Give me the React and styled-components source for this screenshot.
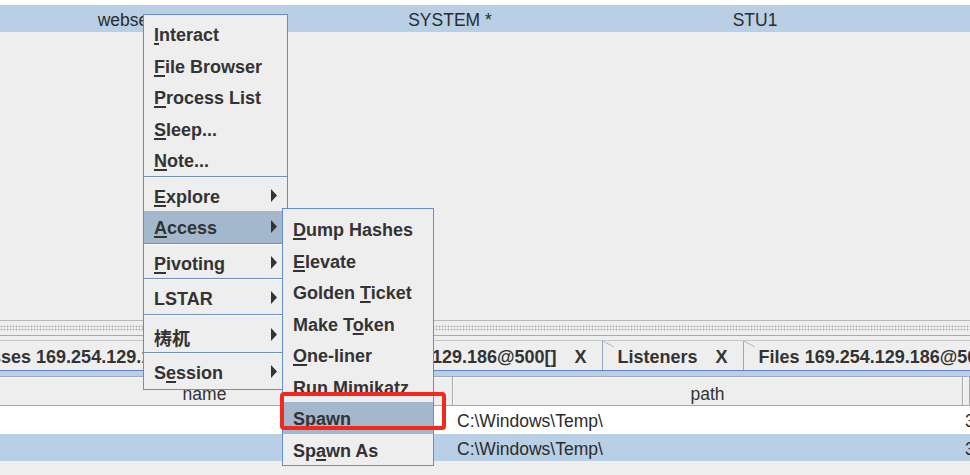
import React from 'react';
import styled, { createGlobalStyle } from 'styled-components';

const GlobalStyle = createGlobalStyle`
	html, body {
		margin: 0;
		padding: 0;
		background: #eeeeee;
	}
	body {
		font-family: "Liberation Sans", Arial, sans-serif;
		color: #333333;
		overflow: hidden;
	}
`;

const Page = styled.div`
	position: relative;
	width: 970px;
	height: 475px;
	overflow: hidden;
	background: #eeeeee;
`;

const TopPane = styled.div`
	height: 320px;
`;

const BlankStrip = styled.div`
	height: 5px;
	background: #ffffff;
`;

const BeaconRow = styled.div`
	display: grid;
	grid-template-columns: 276px 348px 262px 1fr;
	align-items: center;
	height: 27px;
	background: ${(p) => (p.$selected ? '#b8cfe5' : '#ffffff')};
	font-size: 17.5px;
	color: #2b2b2b;
`;

const Cell = styled.div`
	text-align: ${(p) => p.$align || 'center'};
	padding-left: ${(p) => p.$pad || 0}px;
	padding-top: 4px;
	white-space: nowrap;
	overflow: hidden;
`;

const Divider = styled.div`
	display: flex;
	align-items: center;
	height: 16px;
	box-sizing: border-box;
	border-top: 1px solid #b9b9b9;
	border-bottom: 1px solid #9aabc8;
`;

const Grip = styled.div`
	flex: 1;
	height: 6px;
	background-image: radial-gradient(circle, #a9a9a9 0.8px, transparent 1.1px);
	background-size: 3px 3px;
`;

const BottomPane = styled.div`
	padding-top: 4px;
`;

const TabStrip = styled.div`
	display: flex;
	height: 30px;
	box-sizing: border-box;
	margin-left: -75px;
	border-top: 1px solid #c6c6c6;
`;

const Tab = styled.div`
	position: relative;
	flex: none;
	display: flex;
	align-items: center;
	gap: 18px;
	padding: 4px 15px 0;
	border-left: 1px solid #98a9c6;
	font-size: 18px;
	font-weight: bold;
	color: #333333;
	white-space: nowrap;

	&::before {
		content: '';
		position: absolute;
		left: 0;
		top: 0;
		width: 11px;
		height: 6px;
		background: linear-gradient(
			to top right,
			transparent calc(50% - 0.7px),
			#98a9c6 50%,
			transparent calc(50% + 0.7px)
		);
	}
`;

const TabEdge = styled.div`
	height: 7px;
	box-sizing: border-box;
	border-top: 1px solid #6382bf;
	border-bottom: 1px solid #9aabc8;
	background: #b8cfe5;
`;

const FileTable = styled.div`
	margin-left: -43px;
`;

const FileRow = styled.div`
	display: grid;
	grid-template-columns: 496px 510px 1fr;
	align-items: center;
	height: ${(p) => (p.$header ? 29 : 27.5)}px;
	background: ${(p) => (p.$header ? '#eeeeee' : p.$selected ? '#b8cfe5' : '#ffffff')};
	font-size: 17.5px;
	color: #2b2b2b;
`;

const HeadCell = styled.div`
	height: 100%;
	box-sizing: border-box;
	display: flex;
	align-items: center;
	justify-content: center;
	padding-top: 6px;
	border-right: 1px solid #a9a9a9;
	border-bottom: 1px solid #a9a9a9;
	box-shadow: inset 1px 1px 0 #fafafa;
	color: #333333;
`;

const Popup = styled.div`
	position: absolute;
	left: ${(p) => p.$x}px;
	top: ${(p) => p.$y}px;
	width: ${(p) => p.$w}px;
	box-sizing: border-box;
	padding: ${(p) => p.$pad};
	background: #eeeeee;
	border: 1px solid #6a8bd0;
	z-index: ${(p) => p.$z};
`;

const Item = styled.div`
	display: flex;
	align-items: center;
	justify-content: space-between;
	height: ${(p) => (p.$tall ? 34.5 : 31.5)}px;
	padding: 0 10px;
	background: ${(p) => (p.$active ? '#a3b8cc' : 'transparent')};
	font-size: 18px;
	font-weight: bold;
	color: #333333;
	white-space: nowrap;
`;

const Label = styled.span`
	padding-top: 4px;
`;

const Cjk = styled.span`
	font-family: "Noto Sans CJK SC", "Liberation Sans", sans-serif;
	font-weight: bold;
	font-size: 18px;
`;

const Mn = styled.span`
	text-decoration: underline;
	text-decoration-thickness: 1.5px;
	text-underline-offset: 2px;
`;

const Separator = styled.div`
	height: 4px;
	background: linear-gradient(to bottom, transparent 0 0.5px, #6f8fcc 0.5px 1.5px, #fbfbfb 1.5px 2.5px, transparent 2.5px);
`;

const Annotation = styled.div`
	position: absolute;
	left: 280px;
	top: 392px;
	width: 166px;
	height: 38px;
	box-sizing: border-box;
	border: 4px solid #f4281d;
	border-radius: 4px;
	z-index: 5;
`;

function Arrow() {
	return (
		<svg width="6" height="13" viewBox="0 0 6 13">
			<polygon points="0,0 6,6.5 0,13" fill="#333333" />
		</svg>
	);
}

function MenuEntry({ children, sub, active, tall }) {
	return (
		<Item $active={active} $tall={tall}>
			<Label>{children}</Label>
			{sub && <Arrow />}
		</Item>
	);
}

export default function App() {
	return (
		<>
			<GlobalStyle />
			<Page>
				<TopPane>
					<BlankStrip />
					<BeaconRow $selected>
						<Cell>webserver</Cell>
						<Cell>SYSTEM *</Cell>
						<Cell>STU1</Cell>
						<Cell />
					</BeaconRow>
				</TopPane>

				<Divider>
					<Grip />
				</Divider>

				<BottomPane>
					<TabStrip>
						<Tab>
							<span>Processes 169.254.129.186@500[]</span>
							<span>X</span>
						</Tab>
						<Tab>
							<span>Beacon 169.254.129.186@500[]</span>
							<span>X</span>
						</Tab>
						<Tab>
							<span>Listeners</span>
							<span>X</span>
						</Tab>
						<Tab>
							<span>Files 169.254.129.186@500[]</span>
							<span>X</span>
						</Tab>
					</TabStrip>
					<TabEdge />
					<FileTable>
						<FileRow $header>
							<HeadCell>name</HeadCell>
							<HeadCell>path</HeadCell>
							<HeadCell />
						</FileRow>
						<FileRow>
							<Cell />
							<Cell $align="left" $pad={4}>{'C:\\Windows\\Temp\\'}</Cell>
							<Cell $align="left" $pad={2}>3</Cell>
						</FileRow>
						<FileRow $selected>
							<Cell />
							<Cell $align="left" $pad={4}>{'C:\\Windows\\Temp\\'}</Cell>
							<Cell $align="left" $pad={2}>3</Cell>
						</FileRow>
					</FileTable>
				</BottomPane>

				<Popup $x={143} $y={14} $w={145} $pad="3px 0 1px" $z={2}>
					<MenuEntry><Mn>I</Mn>nteract</MenuEntry>
					<MenuEntry><Mn>F</Mn>ile Browser</MenuEntry>
					<MenuEntry><Mn>P</Mn>rocess List</MenuEntry>
					<MenuEntry><Mn>S</Mn>leep...</MenuEntry>
					<MenuEntry><Mn>N</Mn>ote...</MenuEntry>
					<Separator />
					<MenuEntry sub><Mn>E</Mn>xplore</MenuEntry>
					<MenuEntry sub active><Mn>A</Mn>ccess</MenuEntry>
					<Separator />
					<MenuEntry sub><Mn>P</Mn>ivoting</MenuEntry>
					<Separator />
					<MenuEntry sub>LSTAR</MenuEntry>
					<Separator />
					<MenuEntry sub tall><Cjk>梼杌</Cjk></MenuEntry>
					<Separator />
					<MenuEntry sub>S<Mn>e</Mn>ssion</MenuEntry>
				</Popup>

				<Popup $x={282} $y={208} $w={152} $pad="4px 0 0" $z={3}>
					<MenuEntry><Mn>D</Mn>ump Hashes</MenuEntry>
					<MenuEntry><Mn>E</Mn>levate</MenuEntry>
					<MenuEntry>Golden <Mn>T</Mn>icket</MenuEntry>
					<MenuEntry>Make T<Mn>o</Mn>ken</MenuEntry>
					<MenuEntry><Mn>O</Mn>ne-liner</MenuEntry>
					<MenuEntry>Run Mimikatz</MenuEntry>
					<MenuEntry active><Mn>S</Mn>pawn</MenuEntry>
					<MenuEntry>Sp<Mn>a</Mn>wn As</MenuEntry>
				</Popup>

				<Annotation />
			</Page>
		</>
	);
}
